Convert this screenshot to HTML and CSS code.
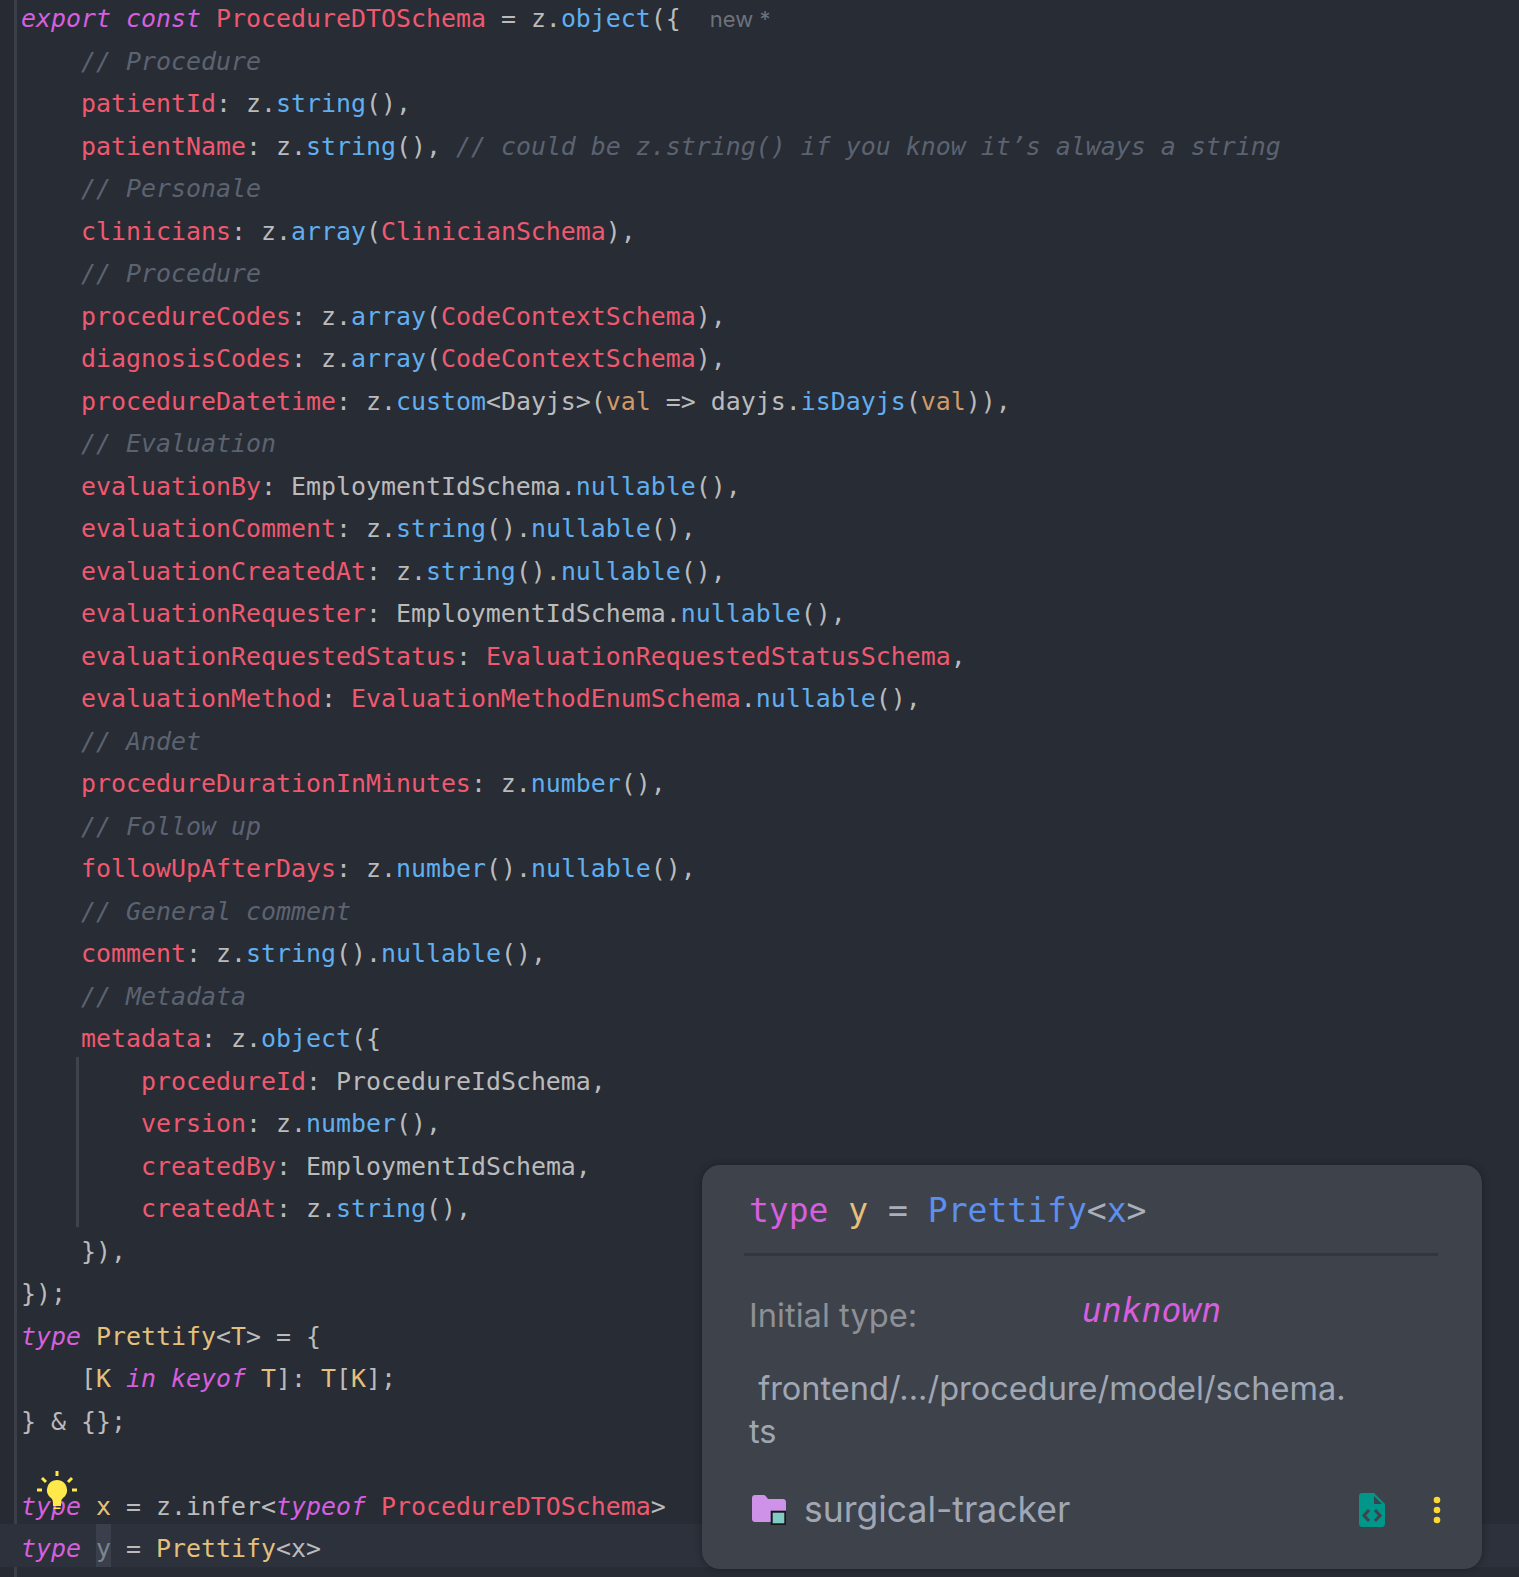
FILE: index.html
```html
<!DOCTYPE html>
<html lang="en">
<head>
<meta charset="utf-8">
<title>schema.ts</title>
<link rel="stylesheet" href="styles.css">
</head>
<body>
<div class="editor">
  <div class="gutter"></div>
  <div class="code">
    <div class="ln"><span class="k">export</span> <span class="k">const</span> <span class="r">ProcedureDTOSchema</span> = z.<span class="b">object</span>({<span class="inlay">new *</span></div>
    <div class="ln in"><span class="c">// Procedure</span></div>
    <div class="ln in"><span class="r">patientId</span>: z.<span class="b">string</span>(),</div>
    <div class="ln in"><span class="r">patientName</span>: z.<span class="b">string</span>(), <span class="c">// could be z.string() if you know it’s always a string</span></div>
    <div class="ln in"><span class="c">// Personale</span></div>
    <div class="ln in"><span class="r">clinicians</span>: z.<span class="b">array</span>(<span class="r">ClinicianSchema</span>),</div>
    <div class="ln in"><span class="c">// Procedure</span></div>
    <div class="ln in"><span class="r">procedureCodes</span>: z.<span class="b">array</span>(<span class="r">CodeContextSchema</span>),</div>
    <div class="ln in"><span class="r">diagnosisCodes</span>: z.<span class="b">array</span>(<span class="r">CodeContextSchema</span>),</div>
    <div class="ln in"><span class="r">procedureDatetime</span>: z.<span class="b">custom</span>&lt;Dayjs&gt;(<span class="o">val</span> =&gt; dayjs.<span class="b">isDayjs</span>(<span class="o">val</span>)),</div>
    <div class="ln in"><span class="c">// Evaluation</span></div>
    <div class="ln in"><span class="r">evaluationBy</span>: EmploymentIdSchema.<span class="b">nullable</span>(),</div>
    <div class="ln in"><span class="r">evaluationComment</span>: z.<span class="b">string</span>().<span class="b">nullable</span>(),</div>
    <div class="ln in"><span class="r">evaluationCreatedAt</span>: z.<span class="b">string</span>().<span class="b">nullable</span>(),</div>
    <div class="ln in"><span class="r">evaluationRequester</span>: EmploymentIdSchema.<span class="b">nullable</span>(),</div>
    <div class="ln in"><span class="r">evaluationRequestedStatus</span>: <span class="r">EvaluationRequestedStatusSchema</span>,</div>
    <div class="ln in"><span class="r">evaluationMethod</span>: <span class="r">EvaluationMethodEnumSchema</span>.<span class="b">nullable</span>(),</div>
    <div class="ln in"><span class="c">// Andet</span></div>
    <div class="ln in"><span class="r">procedureDurationInMinutes</span>: z.<span class="b">number</span>(),</div>
    <div class="ln in"><span class="c">// Follow up</span></div>
    <div class="ln in"><span class="r">followUpAfterDays</span>: z.<span class="b">number</span>().<span class="b">nullable</span>(),</div>
    <div class="ln in"><span class="c">// General comment</span></div>
    <div class="ln in"><span class="r">comment</span>: z.<span class="b">string</span>().<span class="b">nullable</span>(),</div>
    <div class="ln in"><span class="c">// Metadata</span></div>
    <div class="ln in"><span class="r">metadata</span>: z.<span class="b">object</span>({</div>
    <div class="guide">
      <div class="ln"><span class="r">procedureId</span>: ProcedureIdSchema,</div>
      <div class="ln"><span class="r">version</span>: z.<span class="b">number</span>(),</div>
      <div class="ln"><span class="r">createdBy</span>: EmploymentIdSchema,</div>
      <div class="ln"><span class="r">createdAt</span>: z.<span class="b">string</span>(),</div>
    </div>
    <div class="ln in">}),</div>
    <div class="ln">});</div>
    <div class="ln"><span class="k">type</span> <span class="y">Prettify</span>&lt;<span class="y">T</span>&gt; = {</div>
    <div class="ln in">[<span class="y">K</span> <span class="k">in</span> <span class="k">keyof</span> <span class="y">T</span>]: <span class="y">T</span>[<span class="y">K</span>];</div>
    <div class="ln">} &amp; {};</div>
    <div class="ln"></div>
    <div class="ln bulb-line"><span class="k">type</span> <span class="y">x</span> = z.infer&lt;<span class="k">typeof</span> <span class="r">ProcedureDTOSchema</span>&gt;<svg class="bulb" viewBox="0 0 40 50" width="40" height="50" aria-hidden="true"><path class="bulb-ray" d="M20 1v5M5 8l4 4M35 8l-4 4M0 20h5M35 20h5"/><path class="bulb-glass" d="M20 10a10 10 0 0 0-6 18c1.500 1.200 2 3 2 6v2h8v-2c0-3 .5-4.800 2-6a10 10 0 0 0-6-18z"/><path class="bulb-base" d="M16.500 37.500h7v1.500h-7z"/></svg></div>
    <div class="ln current"><span class="k">type</span> <span class="hl">y</span> = <span class="y">Prettify</span>&lt;x&gt;</div>
  </div>
</div>

<aside class="popup">
  <div class="sig"><span class="pk">type</span> <span class="py">y</span> <span class="pe">=</span> <span class="pb">Prettify</span><span class="pa">&lt;</span><span class="pb">x</span><span class="pa">&gt;</span></div>
  <div class="rule"></div>
  <div class="meta">
    <span class="label">Initial type:</span>
    <span class="unknown">unknown</span>
  </div>
  <div class="path">&nbsp;frontend/.../procedure/model/schema.<br>ts</div>
  <div class="foot">
    <svg class="folder" viewBox="0 0 34 30" width="34" height="30" aria-hidden="true">
      <path class="folder-body" d="M3 0h8c1.500 0 2.500.6 3.500 2l1.500 2h15c1.700 0 3 1.300 3 3v17c0 1.700-1.300 3-3 3H3c-1.700 0-3-1.300-3-3V3c0-1.700 1.300-3 3-3z"/>
      <rect class="folder-badge" x="19.700" y="16.700" width="13.600" height="12.600"/>
    </svg>
    <span class="repo">surgical-tracker</span>
    <svg class="file" viewBox="0 0 26 34" width="26" height="34" aria-hidden="true">
      <path class="file-body" d="M3 0h12l11 11v20c0 1.700-1.300 3-3 3H3c-1.700 0-3-1.300-3-3V3c0-1.700 1.300-3 3-3z"/>
      <path class="file-cut" d="M15 3l8 8h-8z"/>
      <path class="file-code" d="M10 17l-5 5.500 5 5.500M16 17l5 5.500-5 5.500"/>
    </svg>
    <svg class="dots" viewBox="0 0 8 28" width="8" height="28" aria-hidden="true">
      <circle cx="4" cy="4" r="3.300"/>
      <circle cx="4" cy="14" r="3.300"/>
      <circle cx="4" cy="24" r="3.300"/>
    </svg>
  </div>
</aside>
</body>
</html>
```
FILE: styles.css
```css
* { box-sizing: border-box; }
html, body { margin: 0; padding: 0; }
body {
  width: 1519px;
  height: 1577px;
  overflow: hidden;
  position: relative;
  background: #282c35;
}
.editor {
  display: flex;
  height: 1577px;
}
.gutter {
  flex: none;
  width: 17px;
  background: #272a32;
  border-right: 3px solid #3a3f49;
}
.code {
  flex: 1;
  margin-top: -6px;
  font-family: "DejaVu Sans Mono", monospace;
  font-size: 24.92px;
  letter-spacing: 0;
  color: #bbbbbb;
}
.ln {
  height: 42.5px;
  line-height: 42.5px;
  padding: 4px 0 0 4px;
  white-space: pre;
}
.ln.in { padding-left: 64px; }
.guide {
  margin-left: 59px;
  border-left: 3px solid #3e434d;
  padding-left: 62px;
}
.guide .ln { padding-left: 0; }
.k { color: #d55fde; font-style: italic; }
.r { color: #ef596f; }
.b { color: #61afef; }
.y { color: #e5c07b; }
.o { color: #d19a66; }
.c { color: #5c6370; font-style: italic; }
.inlay {
  font-family: "Inter", sans-serif;
  font-size: 22px;
  letter-spacing: 0;
  color: #6d727b;
  margin-left: 29px;
}
.bulb-line { position: relative; }
.bulb {
  position: absolute;
  left: 20px;
  top: -11.5px;
}
.bulb-ray { fill: none; stroke: #ffe84a; stroke-width: 3; }
.bulb-glass, .bulb-base { fill: #ffe84a; }
.current { background: #2c313b; margin-left: -17px; padding-left: 21px; }
.hl { display: inline-block; height: 42.5px; vertical-align: top; background: #3a3f4b; color: #7d8591; margin-top: -4px; padding-top: 4px; }

.popup {
  position: absolute;
  left: 702px;
  top: 1165px;
  width: 780px;
  height: 404px;
  padding: 0 41px 0 47px;
  background: #3e424b;
  border-radius: 18px;
  box-shadow: 0 0 6px rgba(20, 22, 28, .6);
}
.sig {
  font-family: "DejaVu Sans Mono", monospace;
  font-size: 33px;
  line-height: 44px;
  padding-top: 24px;
  height: 88px;
  white-space: pre;
}
.pk { color: #d55fde; }
.py { color: #e5c07b; }
.pe { color: #a9b0bb; }
.pb { color: #5d8fef; }
.pa { color: #a9b0bb; }
.rule {
  height: 3px;
  margin: 0 3px 0 -5px;
  background: #33363d;
}
.meta {
  display: flex;
  align-items: flex-start;
  height: 112px;
  padding-top: 37px;
}
.label {
  font-family: "Inter", sans-serif;
  font-size: 32.700px;
  line-height: 44px;
  width: 333px;
  color: #8d9096;
}
.unknown {
  font-family: "DejaVu Sans Mono", monospace;
  font-size: 33px;
  line-height: 44px;
  font-style: italic;
  color: #d55fde;
  margin-top: -4px;
}
.path {
  font-family: "Inter", sans-serif;
  font-size: 32.500px;
  line-height: 42.500px;
  color: #a0a7b4;
}
.foot {
  display: flex;
  align-items: center;
  margin-top: 35px;
  height: 44px;
  padding-left: 3px;
}
.repo {
  flex: 1;
  margin: -2px 0 0 18px;
  font-family: "Inter", sans-serif;
  font-size: 35.500px;
  color: #a0a7b4;
}
.folder-body { fill: #ce93e8; }
.folder-badge { fill: #80cbc4; stroke: #15171b; stroke-width: 2; }
.file { margin-right: 48px; }
.file-body { fill: #00968a; }
.file-cut { fill: #3e424b; }
.file-code { fill: none; stroke: #3e424b; stroke-width: 3; }
.dots { fill: #fdd835; }
```
